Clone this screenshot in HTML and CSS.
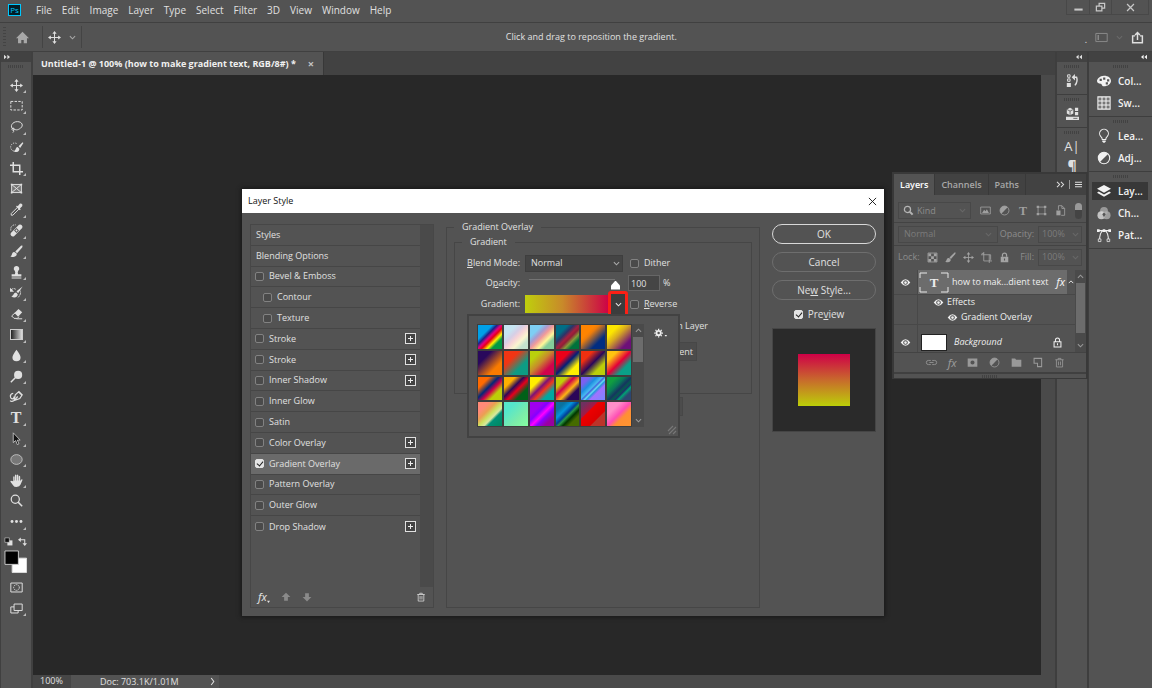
FILE: index.html
```html
<!DOCTYPE html>
<html lang="en">
<head>
<meta charset="utf-8">
<title>Untitled-1 - Layer Style</title>
<link rel="stylesheet" href="styles.css">
</head>
<body>
<svg class="sprite" aria-hidden="true">
  <symbol id="move" viewBox="0 0 16 16"><path class="s" d="M8 2v12M2 8h12"/><path class="f" d="M8 0l2.600 3.500H5.400zM8 16l2.600-3.500H5.400zM0 8l3.500-2.600v5.200zM16 8l-3.500-2.600v5.200z"/></symbol>
  <symbol id="chev" viewBox="0 0 8 8"><path class="s" d="M1 2.500l3 3 3-3"/></symbol>
  <symbol id="chevup" viewBox="0 0 8 8"><path class="s" d="M1 5.500l3-3 3 3"/></symbol>
  <symbol id="eye" viewBox="0 0 16 16"><path class="f" fill-rule="evenodd" d="M1 8q7-9.500 14 0q-7 9.500-14 0zM8 4.600a3.400 3.400 0 1 0 0 6.800a3.400 3.400 0 1 0 0-6.800zM8 6a2 2 0 1 1 0 4a2 2 0 1 1 0-4z"/></symbol>
  <symbol id="adj" viewBox="0 0 16 16"><circle class="s" cx="8" cy="8" r="6.500"/><path class="f" d="M12.600 3.400a6.500 6.500 0 0 0-9.200 9.200z"/></symbol>
  <symbol id="trash" viewBox="0 0 16 16"><path class="s" d="M2 4h12M6 4V2h4v2M3.500 4v10.500h9V4M6.500 6.500v5.500M9.500 6.500v5.500"/></symbol>
  <symbol id="brush" viewBox="0 0 16 16"><path class="f" d="M15.500 1q-1-1-2 0L6.500 8l2.200 2.200L15 3zM5.800 8.800q-2-.5-3 1.500Q2.300 13 .5 14q5 2 7.300-1 1-1.500 0-3z"/></symbol>
  <symbol id="lock" viewBox="0 0 16 16"><path class="s w2" d="M5 7V4.500a3 3 0 0 1 6 0V7"/><path class="f" fill-rule="evenodd" d="M2.500 7h11v8h-11zM7.200 9.500v3h1.600v-3z"/></symbol>
  <symbol id="arrow" viewBox="0 0 16 16"><path class="f" d="M8 1l7 7h-4v6H5V8H1z"/></symbol>
</svg>

<div class="app">
  <header class="menubar">
    <span class="logo">Ps</span>
    <nav class="menus">
      <button>File</button><button>Edit</button><button>Image</button><button>Layer</button><button>Type</button><button>Select</button><button>Filter</button><button>3D</button><button>View</button><button>Window</button><button>Help</button>
    </nav>
    <div class="winctl">
      <button aria-label="Minimize"><svg viewBox="0 0 16 16"><path class="s w3" d="M2 11h12"/></svg></button>
      <button aria-label="Restore"><svg viewBox="0 0 16 16"><path class="s w2" d="M2 6h8v7H2zM6 6V2h8v7h-4"/></svg></button>
      <button aria-label="Close"><svg viewBox="0 0 16 16"><path class="s w2" d="M3 3l10 10M13 3L3 13"/></svg></button>
    </div>
  </header>

  <div class="options">
    <i class="vgrip"></i>
    <button class="home" aria-label="Home"><svg viewBox="0 0 16 16"><path class="f" d="M8 1L0 9h2.500v6h4v-4h3v4h4V9H16z"/></svg></button>
    <button class="tool-now" aria-label="Move tool"><svg><use href="#move"/></svg><svg class="c8"><use href="#chev"/></svg></button>
    <p class="hint">Click and drag to reposition the gradient.</p>
    <div class="opt-right">
      <span class="dot">.</span>
      <button aria-label="Workspace"><svg class="dim" viewBox="0 0 16 16"><path class="s" d="M1 3h14v10H1z"/><path class="s w2" d="M4 5v6"/></svg></button>
      <svg class="c8 faint"><use href="#chev"/></svg>
      <button aria-label="Share"><svg viewBox="0 0 16 16"><path class="s w2" d="M5 6H2v8.500h12V6h-3M8 11V3M5 5l3-3 3 3"/></svg></button>
    </div>
  </div>

  <div class="work">
    <aside class="toolbar">
      <div class="strip left"><svg class="c8" viewBox="0 0 8 8"><path class="f" d="M0 1l3.500 3L0 7zM4.500 1L8 4 4.500 7z"/></svg></div>
      <i class="grip"></i>
      <div class="tools">
        <button aria-label="Move"><svg><use href="#move"/></svg></button>
        <button aria-label="Marquee"><svg viewBox="0 0 16 16"><path class="s" stroke-dasharray="3 1.600" d="M1 3h14v10.500H1z"/></svg></button>
        <button aria-label="Lasso"><svg viewBox="0 0 16 16"><path class="s" d="M4 11.500C-1 8 3 2 9 2s8 5 4 8-6 2.500-9 .5M4 10q-2 0-1.500 1.800T5 12q.5-1.700-1-2M4.500 12.500q.5 2-1 3"/></svg></button>
        <button aria-label="Quick selection"><svg viewBox="0 0 16 16"><path class="s" stroke-dasharray="1.500 1.500" d="M8 3a5 5 0 1 0 0 9"/><path class="f" d="M15.500 1.500l-5 5 2 2 4-6zM9.500 7.500c-3 0-1.500 4-5 5 5 2.500 7 0 7-3z"/></svg></button>
        <button aria-label="Crop"><svg viewBox="0 0 16 16"><path class="s w2" d="M4 0v12h12M0 4h12v12"/></svg></button>
        <button class="nofly" aria-label="Frame"><svg viewBox="0 0 16 16"><path d="M2 3h12v10H2z" fill="#777"/><path class="s" d="M2 3h12v10H2zM2 3l12 10M14 3L2 13"/><path class="f" d="M1 2h2v2H1zM13 2h2v2h-2zM1 12h2v2H1zM13 12h2v2h-2z"/></svg></button>
        <button aria-label="Eyedropper"><svg viewBox="0 0 16 16"><path class="s" d="M9 5.500l-7.500 7.500v2h2L11 7.500"/><path class="f" d="M7.500 4.500l4.500 4.500 1.200-1.200-1-1L15 4q1-2-.7-3T12 1L9.500 4l-1-1z"/></svg></button>
        <button aria-label="Healing brush"><svg viewBox="0 0 16 16"><path class="s" stroke-dasharray="1.500 1" d="M1 8V5q1-4 6-4"/><path class="f" fill-rule="evenodd" d="M1 11L11 1q2-1 3.500.5T15 5L5 15q-2 1-3.500-.5T1 11zM5 8l3-3 3 3-3 3zM8 6.600L9.400 8 8 9.400 6.600 8z"/></svg></button>
        <button aria-label="Brush"><svg><use href="#brush"/></svg></button>
        <button aria-label="Clone stamp"><svg viewBox="0 0 16 16"><path class="f" d="M8 0a3.300 3.300 0 0 0-2 6q1 2 0 4H2v3h12v-3h-4q-1-2 0-4a3.300 3.300 0 0 0-2-6zM2 14h12v1.500H2z"/></svg></button>
        <button aria-label="History brush"><svg viewBox="0 0 16 16"><path class="s" d="M1 5q3-3 6-1M11 5q2 0 2 3t-3 6" stroke-dasharray="3 1"/><path class="f" d="M0 2v5h5zM15.500.5L8 6.500l2 2.500zM7.500 8c-3 0-3 4-6 5 5 2.500 8 0 8-3z"/></svg></button>
        <button aria-label="Eraser"><svg viewBox="0 0 16 16"><path class="s" d="M6.500 7L2 11l3 3h4l2-2M8 14.500h7"/><path class="f" d="M10.500 2.500l4.500 4-5 5.500-4.500-4.500z"/></svg></button>
        <button aria-label="Gradient"><i class="grad-ico"></i></button>
        <button aria-label="Blur"><svg viewBox="0 0 16 16"><path class="f" d="M8 1q5 6.500 5 9.500a5 4.700 0 0 1-10 0Q3 7.500 8 1z"/></svg></button>
        <button aria-label="Dodge"><svg viewBox="0 0 16 16"><circle class="f" cx="10" cy="6" r="5"/><path class="s w2" d="M6.500 9.500L1 15"/></svg></button>
        <button aria-label="Pen"><svg viewBox="0 0 16 16"><path class="s w15" d="M5 13L6.500 6 11 2l4 4-3 4.500zM5 13l4.500-5M10.500 2.500l4.500 4M4 4Q0 5 .5 8t2.500 3 2-3M0 13q2 2 5 0"/></svg></button>
        <button class="type" aria-label="Type">T</button>
        <button aria-label="Path selection"><svg viewBox="0 0 16 16"><path d="M4 1l8.500 9H9l2 4.500-2 1-2-5L4 13z" fill="#111" stroke="#ddd" stroke-width=".9"/></svg></button>
        <button aria-label="Ellipse"><svg viewBox="0 0 16 16"><ellipse cx="8" cy="8" rx="7" ry="6" fill="#777" stroke="#ccc"/></svg></button>
        <button aria-label="Hand"><svg viewBox="0 0 16 16"><path class="f" d="M4 9V3.500q1-1.500 1.600 0V8h.5V1.500q1-1.500 1.800 0V8h.5V1.500q1-1.500 1.800 0V8h.5V3q1-1.400 1.800 0v6l1-2q1.500-1 2 0L13 13q-1 3-5 3-3 0-4-2L.500 9.500q0-1.500 1.700-1z"/></svg></button>
        <button class="nofly" aria-label="Zoom"><svg viewBox="0 0 16 16"><circle class="s w15" cx="6.500" cy="6.500" r="5"/><path class="s w2" d="M10 10l5 5"/></svg></button>
        <button aria-label="More tools"><svg viewBox="0 0 16 16"><circle class="f" cx="2.500" cy="8" r="1.800"/><circle class="f" cx="8" cy="8" r="1.800"/><circle class="f" cx="13.500" cy="8" r="1.800"/></svg></button>
      </div>
      <div class="mini">
        <svg viewBox="0 0 16 16"><path class="f" d="M6 6h9v9H6z"/><path d="M1.500 1.500h8v8h-8z" fill="#111" stroke="#ddd"/></svg>
        <svg viewBox="0 0 16 16"><path class="s w2" d="M3 5h9v8"/><path class="f" d="M5 1v8L0 5zM8 11h8l-4 5z"/></svg>
      </div>
      <svg class="fgbg" viewBox="0 0 24 24"><path d="M8.500 8.500h15v15h-15z" fill="#fff" stroke="#ddd"/><path d="M1 1h14v14H1z" fill="#000" stroke="#ccc"/></svg>
      <div class="modes">
        <button class="nofly" aria-label="Quick mask"><svg viewBox="0 0 16 16"><path class="s" d="M1 2.500h14v11H1z"/><circle class="s" stroke-dasharray="1.500 1" cx="8" cy="8" r="3.500"/></svg></button>
        <button aria-label="Screen mode"><svg viewBox="0 0 16 16"><path class="s" d="M5 2.500h10v8H5zM5 6H1v7.500h9v-3"/></svg></button>
      </div>
    </aside>

    <main class="doc">
      <div class="tabs"><div class="tab">Untitled-1 @ 100% (how to make gradient text, RGB/8#) *<button aria-label="Close tab">×</button></div></div>
      <div class="canvas"></div>
      <footer class="status"><span class="zoom">100%</span><span class="size">Doc: 703.1K/1.01M<svg class="c8" viewBox="0 0 8 8"><path class="s" d="M2.500 0l3 4-3 4"/></svg></span></footer>
    </main>

    <aside class="dock narrow">
      <div class="strip"><svg class="c8" viewBox="0 0 8 8"><path class="f" d="M3.500 1L0 4l3.500 3zM8 1L4.500 4 8 7z"/></svg></div>
      <section><i class="grip"></i><button aria-label="History"><svg viewBox="0 0 16 16"><path class="s" d="M2 1h3v3H2zM2 6h3v3H2z"/><path class="f" d="M1 11h5v5H1zM7 4l4-4v8z"/><path class="s w2" d="M10 4h3q2 5-2 10"/></svg></button></section>
      <section><i class="grip"></i><button aria-label="Libraries"><svg viewBox="0 0 16 16"><path class="f" d="M5 1l4 2v5l-4 2-4-2V3zM11 1h4v4h-4zM11 6h4v4h-4zM0 12h16v4H0z"/><path d="M1 3l4 2 4-2M5 5v5M9 14h5" stroke="#555" fill="none"/></svg></button></section>
      <section><i class="grip"></i><button class="char" aria-label="Character">A|</button><button class="para" aria-label="Paragraph">¶</button></section>
    </aside>

    <aside class="dock wide">
      <div class="strip"><svg class="c8" viewBox="0 0 8 8"><path class="f" d="M3.500 1L0 4l3.500 3zM8 1L4.500 4 8 7z"/></svg></div>
      <section><i class="grip"></i>
        <button><svg viewBox="0 0 16 16"><path class="f" fill-rule="evenodd" d="M8 2c5 0 8 2.500 8 6s-4 6-8 6c-3 0-2-3-4-3s-4-1-4-3 3-6 8-6zM7 4v2.500h2.500V4zM11.500 6v2.500H14V6zM10 9.500V12h2.500V9.500zM3 5.500V8h2.500V5.500z"/></svg>Col...</button>
        <button><svg viewBox="0 0 16 16"><path fill="#777" d="M1 1h14v14H1z"/><path class="s" d="M1 1h14v14H1zM1 5.700h14M1 10.300h14M5.700 1v14M10.300 1v14"/></svg>Sw...</button>
      </section>
      <section><i class="grip"></i>
        <button><svg viewBox="0 0 16 16"><path class="s" d="M6 12q0-2-1.800-3.500a5 5 0 1 1 7.600 0Q10 10 10 12z"/><path class="f" d="M6 13h4v1.500L8 16l-2-1.500z"/></svg>Lea...</button>
        <button><svg><use href="#adj"/></svg>Adj...</button>
      </section>
      <section><i class="grip"></i>
        <button class="on"><svg viewBox="0 0 16 16"><path class="f" d="M8 1l8 4.500L8 10 0 5.500zM2 8.500L0 10l8 4.500L16 10l-2-1.500-6 3.500z"/></svg>Lay...</button>
        <button><svg viewBox="0 0 16 16"><circle cx="8" cy="5.500" r="4.500" fill="#999"/><circle cx="5" cy="10.500" r="4.500" fill="#e0e0e0" opacity=".8"/><circle cx="11" cy="10.500" r="4.500" fill="#b0b0b0" opacity=".8"/><path fill="#555" d="M8 7.500l2 2-2 3-2-3z"/></svg>Ch...</button>
        <button><svg viewBox="0 0 16 16"><path class="s" d="M2 3h12M3 14q0-9 4-11M13 14q0-9-4-11"/><path class="f" d="M0 1.500h3v3H0zM6.500 1.500h3v3h-3zM13 1.500h3v3h-3z"/><path d="M1.500 12.500h3v3h-3zM11.500 12.500h3v3h-3z" fill="#555" stroke="#ddd"/></svg>Pat...</button>
      </section>
    </aside>
  </div>

  <section class="layers" aria-label="Layers panel">
    <div class="ltabs"><button class="on">Layers</button><button>Channels</button><button>Paths</button><span class="lmenu"><svg class="c8" viewBox="0 0 8 8"><path class="s" d="M0 1l3 3-3 3M4.500 1l3 3-3 3"/></svg><i></i><svg class="c8" viewBox="0 0 8 8"><path class="s" d="M0 1.500h8M0 4h8M0 6.500h8"/></svg></span></div>
    <div class="lrow filter">
      <label class="box kind"><svg viewBox="0 0 16 16"><circle class="s w2" cx="6.500" cy="6.500" r="4.500"/><path class="s w3" d="M10 10l4 4"/></svg><select aria-label="Filter kind"><option>Kind</option></select><svg class="c8"><use href="#chev"/></svg></label>
      <svg viewBox="0 0 16 16"><path class="s" d="M1 3h14v10H1z"/><path class="f" d="M3 11.500L6 7l2 2 2-3 3 5.500z"/></svg>
      <svg><use href="#adj"/></svg><b class="serif">T</b>
      <svg viewBox="0 0 16 16"><path class="s" d="M3 3h10v10H3z"/><path class="f" d="M1 1h3.500v3.500H1zM11.500 1H15v3.500h-3.500zM1 11.500h3.500V15H1zM11.500 11.500H15V15h-3.500z"/></svg>
      <svg viewBox="0 0 16 16"><path class="s" d="M5 7V1h5l4 4v10H9M10 1v4h4"/><path class="f" d="M2 8h6v7H2z"/></svg>
      <i class="toggle"></i>
    </div>
    <div class="lrow line">
      <label class="box mode"><select aria-label="Layer blend mode"><option>Normal</option></select><svg class="c8"><use href="#chev"/></svg></label>
      <label class="pct">Opacity:<span class="box"><input type="text" value="100%"><svg class="c8"><use href="#chev"/></svg></span></label>
    </div>
    <div class="lrow line lockrow">
      <span>Lock:</span>
      <svg viewBox="0 0 16 16"><path class="s" d="M1.500 1.500h13v13h-13z"/><path class="f" d="M2 2h4v4H2zM10 2h4v4h-4zM6 6h4v4H6zM2 10h4v4H2zM10 10h4v4h-4z"/></svg>
      <svg><use href="#brush"/></svg><svg><use href="#move"/></svg>
      <svg viewBox="0 0 16 16"><path class="s" d="M4 0v13h8l2-2V4H0M12 16v-3M4 2H1M12 4v9h4"/></svg>
      <svg><use href="#lock"/></svg>
      <label class="pct">Fill:<span class="box"><input type="text" value="100%"><svg class="c8"><use href="#chev"/></svg></span></label>
    </div>
    <div class="llist">
      <div class="items">
        <div class="eyecol"><svg><use href="#eye"/></svg></div>
        <div class="item sel"><svg class="tthumb" viewBox="0 0 30 21"><path d="M8 1H1v5M22 1h7v5M8 20H1v-5M22 20h7v-5" fill="none" stroke="#e8e8e8"/><text x="15" y="15">T</text></svg><span>how to mak...dient text</span><em class="fx">fx</em><svg class="c8"><use href="#chevup"/></svg></div>
        <div class="eyecol"></div>
        <div class="item effects"><p><svg><use href="#eye"/></svg>Effects</p><p class="sub"><svg><use href="#eye"/></svg>Gradient Overlay</p></div>
        <div class="eyecol last"><svg><use href="#eye"/></svg></div>
        <div class="item last"><i class="thumb"></i><em>Background</em><svg viewBox="0 0 16 16"><path class="s w15" d="M5 7V4.500a3 3 0 0 1 6 0V7M3 7h10v7.500H3zM8 9v3"/></svg></div>
      </div>
      <div class="vscroll"><svg class="c8"><use href="#chevup"/></svg><i></i><svg class="c8"><use href="#chev"/></svg></div>
    </div>
    <div class="lfoot">
      <button aria-label="Link layers"><svg viewBox="0 0 16 16"><path class="s" d="M7 5H3.500a3 3 0 0 0 0 6H7M9 5h3.500a3 3 0 0 1 0 6H9M5 8h6"/></svg></button>
      <button class="fx" aria-label="Layer effects">fx</button>
      <button aria-label="Add mask"><svg viewBox="0 0 16 16"><path class="f" fill-rule="evenodd" d="M1 2h14v12H1zM8 5a3 3 0 1 0 0 6 3 3 0 0 0 0-6z"/></svg></button>
      <button aria-label="Adjustment layer"><svg><use href="#adj"/></svg></button>
      <button aria-label="New group"><svg viewBox="0 0 16 16"><path class="f" d="M1 2h5l1.500 2H15v10H1z"/></svg></button>
      <button aria-label="New layer"><svg viewBox="0 0 16 16"><path class="s w15" d="M3 2h11v12H8V9H3z"/></svg></button>
      <button aria-label="Delete layer"><svg><use href="#trash"/></svg></button>
    </div>
    <div class="lgrip"><i class="grip"></i></div>
  </section>

  <section class="dialog" role="dialog" aria-labelledby="dlg">
    <header><h1 id="dlg">Layer Style</h1><button aria-label="Close dialog"><svg viewBox="0 0 10 10"><path d="M1 1l8 8M9 1L1 9" stroke="#111" fill="none"/></svg></button></header>
    <div class="dbody">
      <div class="styles">
        <div class="slist">
          <div class="rows">
            <button class="srow">Styles</button>
            <button class="srow">Blending Options</button>
            <div class="srow"><label><input type="checkbox">Bevel &amp; Emboss</label></div>
            <div class="srow in"><label><input type="checkbox">Contour</label></div>
            <div class="srow in"><label><input type="checkbox">Texture</label></div>
            <div class="srow"><label><input type="checkbox">Stroke</label><button class="plus" aria-label="Add stroke"></button></div>
            <div class="srow"><label><input type="checkbox">Stroke</label><button class="plus" aria-label="Add stroke"></button></div>
            <div class="srow"><label><input type="checkbox">Inner Shadow</label><button class="plus" aria-label="Add inner shadow"></button></div>
            <div class="srow"><label><input type="checkbox">Inner Glow</label></div>
            <div class="srow"><label><input type="checkbox">Satin</label></div>
            <div class="srow"><label><input type="checkbox">Color Overlay</label><button class="plus" aria-label="Add color overlay"></button></div>
            <div class="srow on"><label><input type="checkbox" checked>Gradient Overlay</label><button class="plus" aria-label="Add gradient overlay"></button></div>
            <div class="srow"><label><input type="checkbox">Pattern Overlay</label></div>
            <div class="srow"><label><input type="checkbox">Outer Glow</label></div>
            <div class="srow"><label><input type="checkbox">Drop Shadow</label><button class="plus" aria-label="Add drop shadow"></button></div>
          </div>
        </div>
        <div class="sfoot"><button class="fx" aria-label="Effects menu">fx<svg viewBox="0 0 4 4"><path class="f" d="M0 1h4L2 4z"/></svg></button><button aria-label="Move up"><svg class="dim"><use href="#arrow"/></svg></button><button aria-label="Move down"><svg class="dim flip"><use href="#arrow"/></svg></button><button class="del" aria-label="Delete effect"><svg><use href="#trash"/></svg></button></div>
      </div>

      <fieldset class="outer">
        <legend>Gradient Overlay</legend>
        <fieldset class="inner">
          <legend>Gradient</legend>
          <div class="form">
            <label class="lab" for="bm"><u>B</u>lend Mode:</label>
            <span class="combo"><select id="bm"><option>Normal</option></select><svg class="c8"><use href="#chev"/></svg></span>
            <label class="ck"><input type="checkbox">Dither</label>
            <label class="lab" for="op">O<u>p</u>acity:</label>
            <input class="slider" type="range" id="op" value="100">
            <span class="num"><input type="text" value="100" aria-label="Opacity percent">%</span>
            <label class="lab" for="gr">Gradient:</label>
            <span class="gpick"><button id="gr" class="gbar" aria-label="Edit gradient"></button><button class="gdrop" aria-label="Open gradient picker"><svg class="c8"><use href="#chev"/></svg></button></span>
            <label class="ck"><input type="checkbox"><span><u>R</u>everse</span></label>
          </div>
          <label class="align">Align with Layer</label>
          <button class="flat reset">Reset Alignment</button>
        </fieldset>
        <button class="flat default">Reset to Default</button>
      </fieldset>

      <div class="actions">
        <button class="ok">OK</button>
        <button>Cancel</button>
        <button><span>Ne<u>w</u> Style...</span></button>
        <label class="ck"><input type="checkbox" checked><span>Pre<u>v</u>iew</span></label>
        <div class="preview"><i></i></div>
      </div>
    </div>

    <div class="picker">
      <div class="swatches">
        <button class="g1" aria-label="Gradient 1"></button><button class="g2" aria-label="Gradient 2"></button><button class="g3" aria-label="Gradient 3"></button><button class="g4" aria-label="Gradient 4"></button><button class="g5" aria-label="Gradient 5"></button><button class="g6" aria-label="Gradient 6"></button>
        <button class="g7" aria-label="Gradient 7"></button><button class="g8" aria-label="Gradient 8"></button><button class="g9" aria-label="Gradient 9"></button><button class="g10" aria-label="Gradient 10"></button><button class="g11" aria-label="Gradient 11"></button><button class="g12" aria-label="Gradient 12"></button>
        <button class="g13" aria-label="Gradient 13"></button><button class="g14" aria-label="Gradient 14"></button><button class="g15" aria-label="Gradient 15"></button><button class="g16" aria-label="Gradient 16"></button><button class="g17" aria-label="Gradient 17"></button><button class="g18" aria-label="Gradient 18"></button>
        <button class="g19" aria-label="Gradient 19"></button><button class="g20" aria-label="Gradient 20"></button><button class="g21" aria-label="Gradient 21"></button><button class="g22" aria-label="Gradient 22"></button><button class="g23" aria-label="Gradient 23"></button><button class="g24" aria-label="Gradient 24"></button>
      </div>
      <div class="vscroll"><svg class="c8"><use href="#chevup"/></svg><i></i><svg class="c8"><use href="#chev"/></svg></div>
      <button class="gear" aria-label="Picker options"><svg viewBox="0 0 20 16"><circle cx="7" cy="8" r="3.500" fill="none" stroke="#eee" stroke-width="3"/><path stroke="#eee" stroke-width="2" d="M7 1v2M7 13v2M0 8h2M12 8h2M2 3l1.500 1.500M10.500 11.500L12 13M12 3l-1.500 1.500M3.500 11.500L2 13M17 12h3"/></svg></button>
      <svg class="corner" viewBox="0 0 8 8"><path class="s" d="M0 5l5-5M1 8l7-7M5 8l3-3"/></svg>
    </div>
  </section>
</div>
</body>
</html>
```
FILE: styles.css
```css
* { box-sizing: border-box; margin: 0; padding: 0; }
body { font: 9px/12px "Open Sans", "Noto Sans", sans-serif; color: #e0e0e0; background: #282828; }
button, input, select { font: inherit; color: inherit; background: none; border: 0; border-radius: 0; outline: 0; }
select { appearance: none; }
button { display: flex; align-items: center; justify-content: center; }
i { display: block; }
svg { display: block; flex: none; width: 13px; height: 13px; overflow: visible; color: inherit; }
.sprite { position: absolute; width: 0; height: 0; }
.c8 { width: 7px; height: 7px; }
.s { fill: none; stroke: currentColor; stroke-width: 1.2; }
.s.w15 { stroke-width: 1.5; }
.s.w2 { stroke-width: 1.8; }
.s.w3 { stroke-width: 3; }
.f { fill: currentColor; }
.dim { color: #8a8a8a; }
.faint { color: #6a6a6a; }

.app { position: relative; display: flex; flex-direction: column; height: 100vh; overflow: hidden; background: #535353; }

.menubar { display: flex; height: 23px; border-bottom: 1px solid #404040; font-size: 10px; }
.logo { width: 13px; height: 12px; margin: 4px 13px 0 8px; border: 1px solid #00c8ff; background: #001d26; color: #00c8ff; font-size: 8px; line-height: 10px; text-align: center; }
.menus { display: flex; gap: 10px; padding: 0 2px; height: 19px; }
.winctl { display: flex; height: 15px; margin: 0 3px 0 auto; border: 1px solid #484848; border-top: 0; color: #c8c8c8; }
.winctl button { width: 22px; }
.winctl button + button { border-left: 1px solid #484848; }
.winctl button:last-child { width: 37px; }
.winctl svg { width: 11px; height: 11px; }

.options { display: flex; align-items: center; height: 29px; border-bottom: 1px solid #404040; }
.vgrip { width: 3px; height: 20px; margin-left: 3px; background: repeating-linear-gradient(#444 0 1px, #535353 1px 3px); }
.home { width: 37px; height: 22px; border-right: 1px solid #444; color: #a8a8a8; }
.home svg { margin-right: 4px; }
.tool-now { gap: 8px; width: 39px; height: 22px; border-right: 1px solid #444; color: #e0e0e0; }
.tool-now .c8 { color: #a8a8a8; }
.hint { flex: 1; text-align: center; }
.options .hint { padding-left: 16px; }
.opt-right { display: flex; align-items: center; gap: 8px; padding-right: 8px; color: #e0e0e0; }
.dot { padding-top: 6px; }

.work { display: flex; flex: 1; min-height: 0; }
.strip { display: flex; align-items: center; justify-content: flex-end; height: 10px; padding: 0 5px; background: #424242; flex: none; }
.strip.left { justify-content: flex-start; padding: 0 3px; }
.strip .c8 { width: 6px; height: 6px; }
.grip { width: 16px; height: 3px; background: repeating-linear-gradient(90deg, #424242 0 1px, #535353 1px 2px); }

.toolbar { display: flex; flex-direction: column; width: 33px; border: solid #404040; border-width: 0 2px 0 1px; flex: none; }
.toolbar > .grip { margin: 3px 7px 7px; }
.tools { display: flex; flex-direction: column; justify-content: space-between; height: 457px; flex: none; }
.tools button, .modes button { position: relative; width: 30px; height: 20px; }
.tools button::after, .modes button::after { content: ""; position: absolute; right: 5px; bottom: 2px; border: solid transparent; border-width: 0 0 3px 3px; border-bottom-color: #bbb; }
.tools .nofly::after, .modes .nofly::after { display: none; }
.tools .type { font: bold 16px/20px "Liberation Serif", serif; }
.grad-ico { width: 13px; height: 11px; border: 1px solid #ccc; background: linear-gradient(90deg, #222, #ddd); }
.mini { display: flex; gap: 5px; padding: 5px 0 4px 3px; }
.mini svg { width: 9px; height: 9px; }
.fgbg { width: 23px; height: 23px; margin-left: 3px; }
.modes { display: flex; flex-direction: column; padding-top: 4px; gap: 1px; }

.doc { display: flex; flex-direction: column; flex: 1; min-width: 0; }
.tabs { display: flex; height: 23px; background: #424242; }
.tab { display: flex; align-items: center; gap: 12px; padding: 0 9px 0 8px; background: #535353; border-right: 1px solid #383838; font-weight: 700; color: #f0f0f0; }
.tab button { color: #c4c4c4; font-size: 11px; }
.canvas { flex: 1; background: #282828; border-right: 14px solid #4a4a4a; }
.status { display: flex; height: 13px; background: #4a4a4a; }
.zoom { width: 38px; padding-left: 7px; background: #464646; }
.size { display: flex; align-items: center; gap: 30px; }
.status .size { padding: 0 3px 0 29px; background: #535353; }

.dock { border-left: 2px solid #3e3e3e; flex: none; }
.dock.narrow { width: 32px; }
.dock.wide { width: 65px; font-size: 10px; font-weight: 600; color: #f2f2f2; }
.dock section { display: flex; flex-direction: column; border-bottom: 1px solid #3e3e3e; }
.dock .grip { margin: 3px auto 2px; }
.narrow section { height: 33px; align-items: center; overflow: hidden; }
.narrow section:last-child { height: auto; }
.narrow button { height: 20px; }
.narrow .char { font-size: 13px; }
.narrow .para { font-size: 14px; font-weight: 700; }
.wide section { padding-bottom: 2px; }
.wide button { justify-content: flex-start; gap: 7px; height: 18px; margin: 2px 4px 2px 3px; padding-left: 5px; font-weight: 600; }
.wide button svg { width: 14px; height: 14px; }
.wide .on { background: #383838; }

.layers { position: absolute; right: 64px; top: 172px; width: 196px; border: solid #393939; border-width: 2px 2px 1px; background: #535353; color: #8c8c8c; }
.ltabs { display: flex; height: 21px; background: #424242; font-weight: 600; }
.ltabs button { padding: 0 6px; border-right: 1px solid #393939; color: #a8a8a8; font-weight: 600; }
.ltabs .on { background: #535353; color: #fff; }
.lmenu { display: flex; align-items: center; gap: 5px; margin-left: auto; padding-right: 4px; color: #ddd; }
.lmenu i { width: 1px; height: 9px; background: #999; }
.lrow { display: flex; align-items: center; padding: 0 4px; height: 27px; }
.lrow svg { width: 11px; height: 11px; }
.lrow svg.c8 { width: 7px; height: 7px; }
.lrow.line { height: 23px; border-top: 1px solid #434343; }
.box { display: flex; align-items: center; gap: 3px; height: 17px; padding: 0 4px; border: 1px solid #484848; color: #7c7c7c; }
.box select { flex: 1; min-width: 0; }
.box .c8 { color: #686868; }
.lrow.filter { justify-content: space-between; padding-top: 4px; color: #a0a0a0; }
.filter .kind { width: 73px; color: #8c8c8c; }
.filter .kind > svg:first-child { color: #b4b4b4; }
.serif { font: bold 12px/12px "Liberation Serif", serif; }
.toggle { width: 7px; height: 16px; border-radius: 4px; background: linear-gradient(#999 0 7px, #444 7px); }
.mode { width: 100px; }
.line .mode { padding: 0 5px; }
.pct { display: flex; align-items: center; gap: 4px; margin-left: auto; }
.pct .box { width: 44px; padding: 0 3px; }
.pct input { width: 27px; }
.lockrow { gap: 7px; }
.lockrow svg { color: #a4a4a4; }
.llist { display: flex; height: 84px; padding-top: 2px; }
.items { flex: 1; display: grid; grid-template-columns: 24px 1fr; grid-template-rows: 25px 30px 27px; color: #f0f0f0; min-width: 0; }
.items > div { display: flex; align-items: center; border-bottom: 1px solid #484848; }
.items > .last { padding-top: 7px; border-bottom: 0; }
.items svg { width: 11px; height: 11px; }
.items svg.c8 { width: 6px; height: 6px; }
.items svg.tthumb { width: 30px; height: 21px; }
.tthumb text { font: bold 13px "Liberation Serif", serif; fill: #eee; text-anchor: middle; }
.eyecol { justify-content: center; border-right: 1px solid #484848; }
.item { min-width: 0; white-space: nowrap; }
.sel { gap: 3px; padding-left: 1px; background: linear-gradient(90deg, #6c6c6c 149px, #535353 149px); }
.sel .fx { margin-left: auto; }
.sel .fx + svg { margin-right: 1px; }
.fx { font: italic 11px/12px "Noto Sans", sans-serif; }
.items .effects { flex-direction: column; align-items: flex-start; justify-content: center; gap: 3px; padding: 0 0 0 15px; }
.effects p { display: flex; align-items: center; gap: 3px; }
.effects .sub { padding-left: 14px; }
.thumb { width: 26px; height: 17px; margin: 0 7px 0 3px; background: #fff; border: 1px solid #222; }
.item.last svg { margin: 0 12px 0 auto; }
.vscroll { display: flex; flex-direction: column; align-items: center; width: 11px; padding: 3px 1px; background: #4a4a4a; color: #999; }
.vscroll i { width: 9px; background: #6c6c6c; margin: 3px 0 auto; }
.llist .vscroll i { height: 50px; }
.lfoot { display: flex; justify-content: space-between; height: 20px; padding: 0 21px 0 32px; border-top: 1px solid #434343; color: #999; }
.lfoot svg { width: 11px; height: 11px; }
.lgrip { height: 6px; padding: 1px 0; border-top: 2px solid #404040; }
.lgrip .grip { margin: 0 auto; }

.dialog { position: absolute; left: 242px; top: 189px; width: 642px; background: #535353; box-shadow: 0 0 4px 1px #181818; }
.dialog header { display: flex; align-items: center; justify-content: space-between; height: 24px; padding: 0 7px 0 6px; background: #fff; color: #111; }
.dialog h1 { font-size: 9px; font-weight: 400; }
.dialog header svg { width: 9px; height: 9px; }
.dbody { display: flex; gap: 12px; height: 403px; padding: 11px 8px 8px; }
.styles { display: flex; flex-direction: column; width: 184px; border: 1px solid #474747; }
.slist { display: flex; flex: 1; border-right: 13px solid #4a4a4a; }
.rows { display: grid; grid-template-rows: repeat(15, 1fr); width: 100%; height: 312px; }
.srow { display: flex; align-items: center; justify-content: space-between; padding: 0 4px; border-bottom: 1px solid #464646; min-height: 0; }
.srow:last-child { border-bottom: 0; }
button.srow { justify-content: flex-start; padding-left: 5px; }
.srow.in { padding-left: 12px; }
.srow.on { background: #6a6a6a; }
.srow label, .ck { display: flex; align-items: center; gap: 5px; }
input[type="checkbox"] { appearance: none; position: relative; width: 9px; height: 9px; border: 1px solid #828282; border-radius: 2px; background: #4a4a4a; flex: none; }
input[type="checkbox"]:checked { background: #e4e4e4; border-color: #e4e4e4; }
input[type="checkbox"]:checked::after { content: ""; position: absolute; left: 2px; top: 0; width: 3px; height: 5px; border: solid #222; border-width: 0 1px 1px 0; transform: rotate(40deg); }
.plus { width: 11px; height: 11px; border: 1px solid #e0e0e0; background: linear-gradient(#eee, #eee) center / 5px 1px no-repeat, linear-gradient(#eee, #eee) center / 1px 5px no-repeat, #444; }
.sfoot { display: flex; align-items: center; gap: 11px; height: 20px; padding: 0 7px; }
.sfoot svg { width: 10px; height: 10px; }
.sfoot .fx svg { width: 3px; height: 3px; margin-top: 8px; }
.sfoot .del { margin-left: auto; }
.flip { transform: rotate(180deg); }

fieldset { border: 1px solid #464646; min-width: 0; }
legend { padding: 0 8px; line-height: 10px; }
.outer { flex: 1; margin-top: -2px; padding: 5px 7px; }
.inner { height: 157px; padding: 7px 0 0; }
.inner legend { margin-left: 7px; }
.form { display: grid; grid-template-columns: 57px 98px 1fr; column-gap: 5px; grid-template-rows: 18px 20px 20px; align-items: center; row-gap: 1px; padding: 0 8px; }
.lab { text-align: right; white-space: nowrap; }
.combo { display: grid; align-items: center; height: 17px; background: #444; border: 1px solid #3e3e3e; }
.combo > * { grid-area: 1 / 1; }
.combo select { padding-left: 5px; }
.combo svg { justify-self: end; margin-right: 2px; color: #aaa; }
.form .ck { padding-left: 2px; }
.slider { appearance: none; width: 95px; height: 16px; background: linear-gradient(#747474, #747474) 4px 4px / 86px 1px no-repeat; }
.slider::-webkit-slider-thumb { appearance: none; width: 9px; height: 9px; margin-top: 4px; background: #fff; clip-path: polygon(50% 0, 100% 55%, 100% 100%, 0 100%, 0 55%); }
.num { display: flex; align-items: center; gap: 3px; }
.num input { width: 32px; height: 16px; padding-left: 2px; background: #454545; border: 1px solid #666; }
.gpick { display: flex; align-items: center; height: 18px; }
.gbar { flex: none; width: 83px; height: 18px; background: linear-gradient(90deg, #bfcf0c, #c88a2a 45%, #cd0346); }
.gdrop { width: 20px; height: 26px; flex: none; border: 3px solid #fb2016; border-radius: 3px; background: #3c3c3c; }
.align, .flat { display: block; width: max-content; margin-left: auto; }
.align { margin-top: 6px; margin-right: 43px; }
.flat { height: 19px; padding: 0 3px; border: 1px solid #474747; background: #4c4c4c; }
.reset { margin-top: 10px; margin-right: 54px; }
.default { margin-top: 3px; margin-right: 69px; }

.actions { display: flex; flex-direction: column; align-items: center; width: 104px; font-size: 10px; }
.actions button { width: 100%; height: 20px; margin-bottom: 8px; border: 1px solid #6e6e6e; border-radius: 10px; }
.actions .ok { border-color: #d8d8d8; }
.actions .ck { margin-right: 10px; }
.preview { display: grid; place-items: center; width: 104px; height: 104px; margin-top: 8px; background: #2a2a2a; border: 1px solid #454545; }
.preview i { width: 52px; height: 52px; background: linear-gradient(#cf0047, #c86a2c 50%, #bccf08); }

.picker { position: absolute; left: 225px; top: 125px; display: flex; width: 213px; height: 124px; padding: 8px; border: 2px solid #424242; background: #535353; }
.swatches { display: grid; grid-template-columns: repeat(6, 1fr); gap: 2px; width: 155px; height: 103px; padding: 1px; background: #3d3d3d; }
.picker .vscroll { height: 103px; width: 12px; }
.picker .vscroll i { height: 25px; width: 10px; }
.gear { height: 18px; margin-left: 10px; }
.gear svg { width: 13px; height: 10px; }
.picker .corner { position: absolute; right: 2px; bottom: 2px; width: 8px; height: 8px; color: #777; }

.g1 { background: linear-gradient(135deg, #00a0e8 30%, #1d2088 40%, #e4007f 49%, #e60012 57%, #fff100 68%, #009944 78%); }
.g2 { background: linear-gradient(135deg, #c6e4f2 25%, #d6cfe6 40%, #f6d3d8 52%, #fbf5cf 68%, #c5e3cf 82%); }
.g3 { background: linear-gradient(135deg, #7ecef4 25%, #a99bd0 38%, #f19a9a 50%, #fff799 66%, #84cc9a 78%); }
.g4 { background: linear-gradient(135deg, #006e86 25%, #2c3468 38%, #a5203f 50%, #8f1f36 57%, #849a3a 68%, #00713b 80%); }
.g5 { background: linear-gradient(135deg, #ff8400 30%, #ec7d0c 38%, #002d82 72%); }
.g6 { background: linear-gradient(135deg, #fce600 25%, #d8ab20 44%, #6d0f79 80%); }
.g7 { background: linear-gradient(135deg, #29085c 28%, #f97b00 72%); }
.g8 { background: linear-gradient(135deg, #f13514 32%, #0d9c84 68%); }
.g9 { background: linear-gradient(135deg, #bad00c 22%, #c88a2c 46%, #d0034c 74%); }
.g10 { background: linear-gradient(135deg, #ec0019 30%, #001f78 50%, #fff000 74%); }
.g11 { background: linear-gradient(135deg, #f03010 25%, #2a085a 50%, #bccf08 74%); }
.g12 { background: linear-gradient(135deg, #ffc410 22%, #e40038 50%, #0aa088 72%); }
.g13 { background: linear-gradient(135deg, #ff6a00 24%, #00287a 44%, #cf0047 58%, #bccf08 74%); }
.g14 { background: linear-gradient(135deg, #ffb000 24%, #2a085a 42%, #e6001c 56%, #006018 74%); }
.g15 { background: linear-gradient(135deg, #ffee00 26%, #7c1078 44%, #f0381c 58%, #00a8a0 76%); }
.g16 { background: linear-gradient(135deg, #bccf08 24%, #d0004c 40%, #ffb414 58%, #2a0658 74%); }
.g17 { background: linear-gradient(135deg, #7c60f0 18%, #1e8ee0 34%, #4abaf0 46%, #4262dc 50%, #68e0f0 56%, #2694dc 60%, #a072ff 68%, #7888ff); }
.g18 { background: linear-gradient(135deg, #119d40 20%, #087858 38%, #16345f 52%, #065950 60%, #1b3568 66%, #00a174 72%, #2c4670 82%); }
.g19 { background: linear-gradient(135deg, #ff8a78 22%, #eba052 38%, #cce160 51%, #d8e8a0 62%, #009078 70%, #00875c); }
.g20 { background: linear-gradient(135deg, #55e6cc 25%, #7cecaa 65%, #84ffa0); }
.g21 { background: linear-gradient(135deg, #a000f0 28%, #8400ff 39%, #ff00ff 52%, #8800ff 63%, #9900a0 80%); }
.g22 { background: linear-gradient(135deg, #0a72a0 20%, #0494dc 35%, #003d98 48%, #2a9845 55%, #003500 65%, #456b00 78%); }
.g23 { background: linear-gradient(135deg, #703060 12%, #a81844 34%, #ec0000 36%, #dc0000 68%, #bb342a 70%); }
.g24 { background: linear-gradient(135deg, #ff8fc8 28%, #ff4eb4 50%, #ff8f34 65%, #ff9530); }
```
